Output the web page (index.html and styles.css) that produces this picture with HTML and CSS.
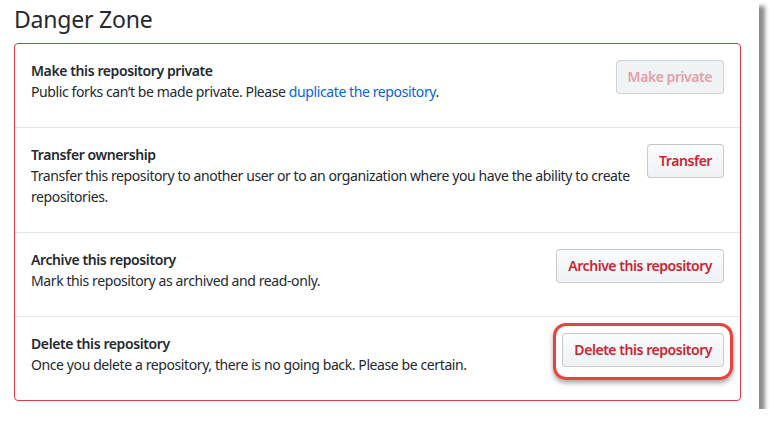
FILE: index.html
```html
<!DOCTYPE html>
<html lang="en">
<head>
    <meta charset="UTF-8">
    <meta name="viewport" content="width=device-width, initial-scale=1.0">
    <title>Danger Zone</title>

    <link rel="stylesheet" href="styles.css">
</head>

<body>
    <div class="page">
        <h2 class="subhead">Danger Zone</h2>

        <div class="danger_box">
            <div class="row">
                <div class="row_text">
                    <h4>Make this repository private</h4>
                    <p>Public forks can’t be made private. Please <a href="#">duplicate the repository</a>.</p>
                </div>
                <button class="btn btn_disabled" disabled>Make private</button>
            </div>

            <div class="row">
                <div class="row_text">
                    <h4>Transfer ownership</h4>
                    <p>Transfer this repository to another user or to an organization where you have the ability to create repositories.</p>
                </div>
                <button class="btn">Transfer</button>
            </div>

            <div class="row">
                <div class="row_text">
                    <h4>Archive this repository</h4>
                    <p>Mark this repository as archived and read-only.</p>
                </div>
                <button class="btn">Archive this repository</button>
            </div>

            <div class="row">
                <div class="row_text">
                    <h4>Delete this repository</h4>
                    <p>Once you delete a repository, there is no going back. Please be certain.</p>
                </div>
                <div class="highlight">
                    <button class="btn">Delete this repository</button>
                    <span class="ring"></span>
                </div>
            </div>
        </div>
    </div>
</body>
</html>
```

FILE: styles.css
```css
*{
    margin: 0;
    padding: 0;
    box-sizing: border-box;
}
body{
    background-color: #ffffff;
    font-family: "Noto Sans", "Open Sans", sans-serif;
    letter-spacing: -0.4px;
    color: #24292e;
}
.page{
    width: 759px;
    height: 409px;
    background-color: #ffffff;
    padding: 5px 18px 0 14px;
    box-shadow: 6px 6px 4px rgba(0,0,0,0.45);
}

.subhead{
    font-size: 23px;
    font-weight: 400;
    letter-spacing: -0.2px;
    line-height: 28px;
    height: 38px;
}

.danger_box{
    border: 1px solid #d73a49;
    border-radius: 4px;
}
.row{
    display: flex;
    align-items: flex-start;
    gap: 10px;
    padding: 16px 16px 15px 16px;
    border-top: 1px solid #e1e4e8;
}
.row:first-child{
    border-top: none;
}
.row_text{
    flex: 1;
    font-size: 14px;
    line-height: 21px;
}
.row_text h4{
    font-size: 14px;
    font-weight: 600;
    line-height: 21px;
}
.row_text p{
    margin-bottom: 10px;
}
.row_text a{
    color: #0366d6;
    text-decoration: none;
}

.btn{
    padding: 6px 11px;
    font-family: inherit;
    font-size: 14px;
    font-weight: 600;
    letter-spacing: -0.45px;
    line-height: 20px;
    color: #cb2431;
    background-color: #f6f7f9;
    background-image: linear-gradient(-180deg, #fafbfc 0%, #eff3f6 90%);
    border: 1px solid rgba(27,31,35,0.2);
    border-radius: 4px;
    white-space: nowrap;
}
.btn_disabled{
    color: #e3a0a8;
    background-image: none;
    background-color: #eff3f6;
    border-color: rgba(27,31,35,0.15);
}

.highlight{
    position: relative;
}
.ring{
    position: absolute;
    top: -10px;
    left: -9px;
    right: -9px;
    bottom: -13px;
    border: 3px solid #e8423f;
    border-radius: 13px;
    box-shadow: 0 3px 5px rgba(0,0,0,0.35);
    pointer-events: none;
}
```
